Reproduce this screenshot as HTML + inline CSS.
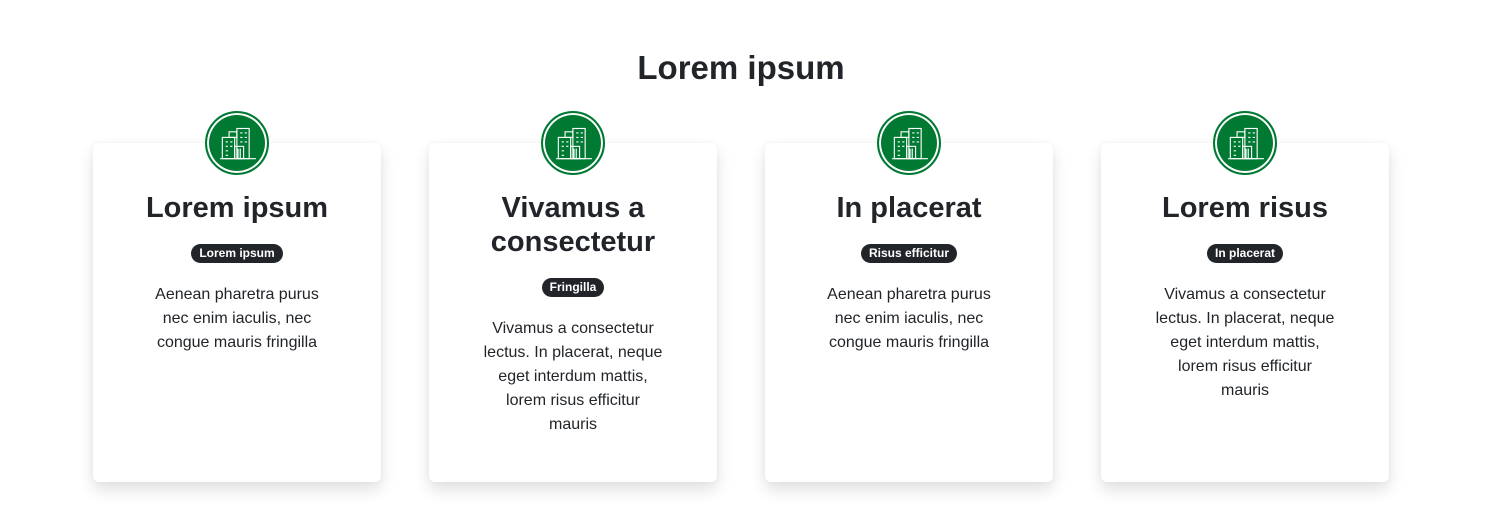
<!DOCTYPE html>
<html><head><meta charset="utf-8"><style>
*{box-sizing:border-box;margin:0;padding:0}
body{width:1494px;height:530px;background:#fff;font-family:"Liberation Sans","DejaVu Sans",sans-serif;color:#212529;position:relative;overflow:hidden}
h1{position:absolute;top:48px;left:0;width:1482px;text-align:center;font-size:33px;font-weight:700;line-height:40px}
.card{position:absolute;top:143px;width:288px;height:339px;background:#fff;border-radius:6px;box-shadow:0 8px 16px rgba(0,0,0,.12),0 0 6px rgba(0,0,0,.04);text-align:center}
.ic{position:absolute;left:112px;top:-32px;width:64px;height:64px;border-radius:50%;background:#007a33;border:2px solid #007a33;box-shadow:inset 0 0 0 2px #fff}
.ic svg{position:absolute;left:12px;top:11px}
.card h2{margin:48px 40px 0;font-size:29px;line-height:34px;font-weight:700}
.badge{display:inline-block;margin-top:19px;background:#212529;color:#fff;font-size:12px;font-weight:700;padding:2px 8px;border-radius:10px;line-height:15px}
.card p{margin:20px auto 0;width:260px;font-size:16px;line-height:24px;white-space:nowrap}
</style></head><body>
<h1>Lorem ipsum</h1>
<div class="card" style="left:93px"><div class="ic"><svg width="38" height="38" viewBox="0 0 34 34" fill="none" stroke="#fff" stroke-width="1"><rect x="3" y="12" width="11" height="19"/><rect x="9" y="7" width="7" height="5"/><rect x="16" y="4" width="11" height="27"/><rect x="14" y="20" width="8" height="11"/><path d="M6 16h2M10 16h2M6 20h2M10 20h2M6 24h2M6 28h2M19 8h2M23 8h2M19 12h2M23 12h2M19 16h2M23 16h2M17 22v9M19 22v9M1 31h32"/></svg></div><h2>Lorem ipsum</h2><span class="badge">Lorem ipsum</span><p>Aenean pharetra purus<br>nec enim iaculis, nec<br>congue mauris fringilla</p></div>
<div class="card" style="left:429px"><div class="ic"><svg width="38" height="38" viewBox="0 0 34 34" fill="none" stroke="#fff" stroke-width="1"><rect x="3" y="12" width="11" height="19"/><rect x="9" y="7" width="7" height="5"/><rect x="16" y="4" width="11" height="27"/><rect x="14" y="20" width="8" height="11"/><path d="M6 16h2M10 16h2M6 20h2M10 20h2M6 24h2M6 28h2M19 8h2M23 8h2M19 12h2M23 12h2M19 16h2M23 16h2M17 22v9M19 22v9M1 31h32"/></svg></div><h2>Vivamus a consectetur</h2><span class="badge">Fringilla</span><p>Vivamus a consectetur<br>lectus. In placerat, neque<br>eget interdum mattis,<br>lorem risus efficitur<br>mauris</p></div>
<div class="card" style="left:765px"><div class="ic"><svg width="38" height="38" viewBox="0 0 34 34" fill="none" stroke="#fff" stroke-width="1"><rect x="3" y="12" width="11" height="19"/><rect x="9" y="7" width="7" height="5"/><rect x="16" y="4" width="11" height="27"/><rect x="14" y="20" width="8" height="11"/><path d="M6 16h2M10 16h2M6 20h2M10 20h2M6 24h2M6 28h2M19 8h2M23 8h2M19 12h2M23 12h2M19 16h2M23 16h2M17 22v9M19 22v9M1 31h32"/></svg></div><h2>In placerat</h2><span class="badge">Risus efficitur</span><p>Aenean pharetra purus<br>nec enim iaculis, nec<br>congue mauris fringilla</p></div>
<div class="card" style="left:1101px"><div class="ic"><svg width="38" height="38" viewBox="0 0 34 34" fill="none" stroke="#fff" stroke-width="1"><rect x="3" y="12" width="11" height="19"/><rect x="9" y="7" width="7" height="5"/><rect x="16" y="4" width="11" height="27"/><rect x="14" y="20" width="8" height="11"/><path d="M6 16h2M10 16h2M6 20h2M10 20h2M6 24h2M6 28h2M19 8h2M23 8h2M19 12h2M23 12h2M19 16h2M23 16h2M17 22v9M19 22v9M1 31h32"/></svg></div><h2>Lorem risus</h2><span class="badge">In placerat</span><p>Vivamus a consectetur<br>lectus. In placerat, neque<br>eget interdum mattis,<br>lorem risus efficitur<br>mauris</p></div>
</body></html>
